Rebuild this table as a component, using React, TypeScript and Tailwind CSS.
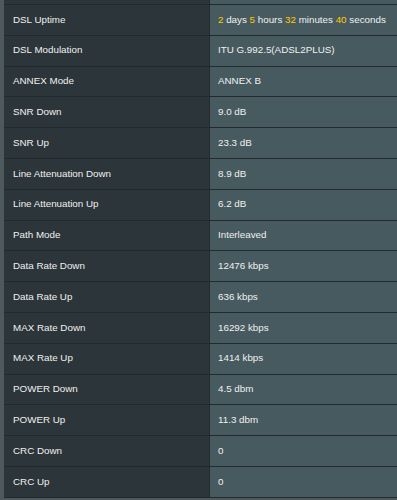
import React from "react";

const Y = ({ children }: { children: React.ReactNode }) => (
  <span className="text-[#ffcc00]">{children}</span>
);

const rows: [string, React.ReactNode][] = [
  [
    "DSL Uptime",
    <>
      <Y>2</Y> days <Y>5</Y> hours <Y>32</Y> minutes <Y>40</Y> seconds
    </>,
  ],
  ["DSL Modulation", "ITU G.992.5(ADSL2PLUS)"],
  ["ANNEX Mode", "ANNEX B"],
  ["SNR Down", "9.0 dB"],
  ["SNR Up", "23.3 dB"],
  ["Line Attenuation Down", "8.9 dB"],
  ["Line Attenuation Up", "6.2 dB"],
  ["Path Mode", "Interleaved"],
  ["Data Rate Down", "12476 kbps"],
  ["Data Rate Up", "636 kbps"],
  ["MAX Rate Down", "16292 kbps"],
  ["MAX Rate Up", "1414 kbps"],
  ["POWER Down", "4.5 dbm"],
  ["POWER Up", "11.3 dbm"],
  ["CRC Down", "0"],
  ["CRC Up", "0"],
];

export default function App() {
  return (
    <div
      className="w-[397px] h-[500px] overflow-hidden bg-[#4d595d] pl-[4px] text-[9.8px] text-[#f0f0f0]"
      style={{ fontFamily: '"Liberation Sans", Arial, sans-serif' }}
    >
      <div className="flex h-[5px] border-b border-[#222a2d]">
        <div className="w-[206px] bg-[#2c3539] border-r border-[#222a2d]" />
        <div className="flex-1 bg-[#475a5f]" />
      </div>
      {rows.map(([label, value], i) => (
        <div key={i} className="flex h-[30.8px] border-b border-[#222a2d]">
          <div className="w-[206px] shrink-0 bg-[#2c3539] border-r border-[#222a2d] flex items-center pl-[9px]">
            <span>{label}</span>
          </div>
          <div className="flex-1 bg-[#475a5f] flex items-center pl-[8px] whitespace-nowrap">
            <span>{value}</span>
          </div>
        </div>
      ))}
    </div>
  );
}
